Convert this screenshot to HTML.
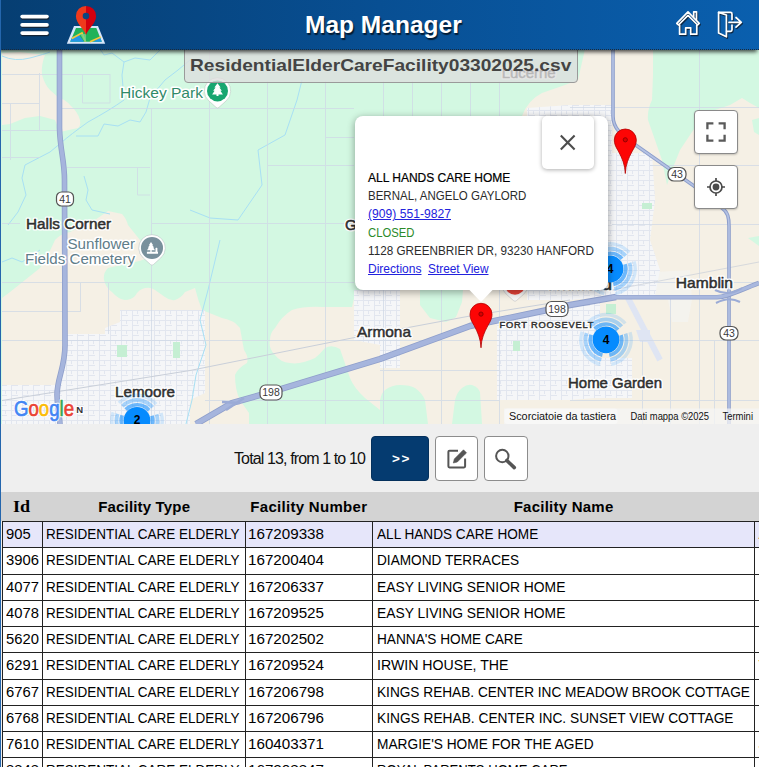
<!DOCTYPE html>
<html>
<head>
<meta charset="utf-8">
<title>Map Manager</title>
<style>
html,body{margin:0;padding:0;}
body{width:759px;height:767px;overflow:hidden;position:relative;background:#efefef;font-family:"Liberation Sans",sans-serif;color:#000;}
.abs{position:absolute;}
#lstrip{left:0;top:0;width:1.4px;height:767px;background:#2466ad;z-index:50;}
#hdr{left:0;top:0;width:759px;height:50px;background:linear-gradient(to right,#063e72 0%,#084f93 50%,#0a5fae 100%);box-shadow:-2px 2px 4px rgba(0,0,0,.7);z-index:40;border-bottom:1px dotted #1b2a3a;box-sizing:border-box;}
#title{left:305px;top:12.1px;font-weight:bold;font-size:23px;line-height:26px;color:#fff;white-space:nowrap;text-shadow:1px 2px 1px rgba(0,0,0,.65);transform:scaleX(1.066);transform-origin:0 50%;}
#map{left:0;top:49px;width:759px;height:375px;overflow:hidden;background:#d3f8e2;border-bottom:1px dotted #555;box-sizing:content-box;}
#flabel{left:184.3px;top:40px;width:391.5px;height:40.5px;background:rgba(222,222,222,.78);border:1px solid #9a9a9a;border-radius:4px;z-index:30;box-sizing:content-box;}
#flabel span{position:absolute;left:5px;top:15px;font-weight:bold;font-size:17px;line-height:20px;color:#444;white-space:nowrap;transform:scaleX(1.127);transform-origin:0 50%;}
#toolbar{left:0;top:424px;width:759px;height:68px;background:#efefef;}
#total{left:234px;top:449px;font-size:16px;line-height:20px;white-space:nowrap;color:#111;letter-spacing:-0.88px;}
.btn{box-sizing:border-box;border-radius:4px;top:436px;height:45px;}
#bnext{left:371px;width:58px;background:#053b70;border:1px solid #04305c;color:#fff;font-weight:bold;font-size:13.5px;text-align:center;line-height:43px;letter-spacing:1.6px;padding-left:3px;}
#bedit{left:435px;width:43px;background:#fff;border:1px solid #8c8c8c;}
#bfind{left:484px;width:44px;background:#fff;border:1px solid #8c8c8c;}
#thead{left:0;top:492px;width:759px;height:29px;background:#d3d3d3;}
.th{position:absolute;top:498px;font-weight:bold;font-size:15px;line-height:18px;white-space:nowrap;color:#000;}
.row{position:absolute;left:2px;width:757px;height:26.27px;background:#fff;border-top:1px solid #222;box-sizing:border-box;}
.row.sel{background:#e6e6fa;}
.c{position:absolute;top:0;height:100%;border-left:1px solid #222;box-sizing:border-box;font-size:15.5px;line-height:24px;white-space:nowrap;overflow:hidden;}
.c span{position:absolute;left:4px;top:0;}
.c1 span,.c3 span{left:2.8px;}
.c2 span{left:3.4px;}
.sx{transform-origin:0 50%;display:inline-block;}
.il{transform-origin:0 50%;height:18.15px;}
.mc{width:41.6px;height:41.4px;background:#fff;border:1px solid #8a8a8a;border-radius:4px;z-index:9;box-shadow:0 1px 2px rgba(0,0,0,.2);}
.c1{left:0;width:40px;}
.c2{left:40px;width:202.5px;}
.c3{left:242.5px;width:127.3px;}
.c4{left:369.8px;width:382.2px;}
.c5{left:752px;width:5px;}
</style>
</head>
<body>
<div id="lstrip" class="abs"></div>

<div id="hdr" class="abs">
<svg class="abs" style="left:0;top:0" width="759" height="49" viewBox="0 0 759 49">
<!--HDRICONS_S-->
<defs>
<g id="hb"><rect x="20.300" y="14.700" width="28.500" height="3.700" rx="1.800"/><rect x="20.300" y="23" width="28.500" height="3.700" rx="1.800"/><rect x="20.300" y="31.200" width="28.500" height="3.700" rx="1.800"/></g>
<g id="home" fill="none" stroke-width="1.700" stroke-linejoin="round" stroke-linecap="round">
<path d="M676.800 23.300 L688 11.800 L699.200 23.300 L697.600 25 L688 15.300 L678.400 25Z"/>
<path d="M679.600 25 V34.200 H685.700 V27.800 H690.700 V34.200 H696.800 V25"/>
<path d="M693.700 16.800 V11.800 H696.500 V19.600"/>
</g>
<g id="exit" fill="none" stroke-width="1.700" stroke-linejoin="round" stroke-linecap="round">
<path d="M718.600 12.400 L726.400 15 V36.800 L718.600 33Z"/>
<path d="M718.600 12.400 H730.500 Q732 12.400 732 14 V19.500 M732 25 V29.800 Q732 31.300 730.500 31.300 H726.600"/>
<path d="M729 22.300 H741 M736 17.500 L741.300 22.300 L736 27.100"/>
</g>
</defs>
<use href="#hb" fill="#16202c" opacity=".85" transform="translate(0.500,1.400)"/>
<use href="#hb" fill="#fff"/>
<!-- logo -->
<g>
<path d="M74 26 H98 L105.200 43.800 H66.800Z" fill="#d7e6fa"/>
<path d="M76 28 H96.300 L101.800 41.800 H70.200Z" fill="#1fb25a"/>
<path d="M70.200 41.800 L72.300 37 L78.500 34.500 L84 41.800Z" fill="#2196e8"/>
<path d="M93 41.800 L100.200 37.800 L101.800 41.800Z" fill="#2196e8"/>
<path d="M71.800 38.400 L82 33 L85.500 41.800" fill="none" stroke="#f7c83a" stroke-width="1.700"/>
<path d="M80.500 33.800 L76.500 28.500" fill="none" stroke="#f7c83a" stroke-width="1.400" opacity="0"/>
<path d="M90 41.800 L100.800 37" fill="none" stroke="#f7c83a" stroke-width="1.700"/>
<path d="M80 34 L86 34 L86 41.800 L84.500 41.800Z" fill="#6fd08d" opacity=".8"/>
<path d="M86 35 C84 29 75.900 23.500 75.900 16 A10.100 10.100 0 0 1 86 5.900Z" fill="#ef3a1c"/>
<path d="M86 35 C88 29 96.100 23.500 96.100 16 A10.100 10.100 0 0 0 86 5.900Z" fill="#d2000f"/>
<circle cx="86" cy="16.100" r="3.300" fill="#0a457f"/>
</g>
<use href="#home" stroke="#101c2c" opacity=".8" transform="translate(0.900,1.300)"/>
<use href="#home" stroke="#fff"/>
<use href="#exit" stroke="#101c2c" opacity=".8" transform="translate(0.900,1.300)"/>
<use href="#exit" stroke="#fff"/>
<!--HDRICONS_E-->
</svg>
<div id="title" class="abs">Map Manager</div>
</div>

<div id="flabel" class="abs"><span id="fl">ResidentialElderCareFacility03302025.csv</span></div>

<div id="map" class="abs">
<svg class="abs" style="left:0;top:0" width="759" height="375" viewBox="0 49 759 375" font-family="Liberation Sans, sans-serif">
<!--MAPBASE_S-->
<defs>
<pattern id="streets" width="11" height="10" patternUnits="userSpaceOnUse">
<path d="M0 .5H11M.5 0V10M5.5 0V4M0 5.5H7" stroke="#e2e6ef" stroke-width="1" fill="none"/>
</pattern>
<filter id="blur1"><feGaussianBlur stdDeviation="1.2"/></filter>
</defs>
<rect x="0" y="49" width="759" height="375" fill="#d3f8e2"/>
<g fill="#f5f0e5">
<!-- B1 top-left beige -->
<path d="M2 53 L20 52 L45 55 Q41 65 42 75 Q45 85 50 90 L58 97 Q66 100 70 105 Q78 112 80 120 Q81 126 78 128 L60 132 L55 120 L40 116 L25 118 L10 124 L2 125Z"/>
<!-- B2 Lemoore beige -->
<path d="M108 211 L122 214 Q126 218 128 225 L140 240 L150 255 Q146 260 135 262 L108 268 Q103 273 104 280 Q106 288 112 292 Q118 299 125 300 Q131 300 135 296 Q139 289 145 288 Q151 287 155 290 L165 297 Q170 301 175 300 Q181 298 185 292 L195 288 Q198 300 202 310 L222 318 Q234 320 240 328 L244 350 Q249 357 247 363 Q238 368 235 375 Q235 390 240 400 L249 413 L249 424 L2 424 L2 298 L10 292 L25 280 L40 268 L48 255 L55 240 Q60 234 70 232 L95 220Z"/>
<!-- big right beige -->
<path d="M585 49 L653 49 L653 75 L652 100 Q647 110 648 120 L655 140 L662 160 L667 185 L672 170 L680 150 L690 135 L700 120 Q706 113 715 110 L730 105 L742 98 L750 103 L759 108 L759 424 L380 424 L380 410 L365 398 Q354 388 350 378 L340 349 Q332 344 325 348 Q320 354 315 358 Q300 365 290 363 Q280 362 275 355 Q268 348 270 340 Q270 333 275 328 Q282 316 292 310 Q305 306 322 307 L352 307 L356 290 L520 290 L522 116 Q528 100 542 93 L565 85 L578 80Z"/>
</g>
<!-- green patches on beige -->
<g fill="#d3f8e2">
<path d="M420 290 L463 290 L462 302 L456 317 L446 322 L430 318 L420 305Z"/>
<path d="M380 424 L380 400 Q382 392 385 390 Q392 385 400 385 Q410 385 415 388 Q422 393 425 400 L428 424Z"/>
<path d="M452 424 L455 400 Q457 392 462 388 Q467 384 472 385 Q478 387 480 392 L482 424Z"/>
<path d="M752 120 L759 118 L759 135 L754 132Z"/>
<path d="M748 238 L759 236 L759 246Z"/>
<path d="M606 304 L616 304 L616 314 L606 314Z" fill="#c5efd3"/>
</g>
<!-- urban areas -->
<g fill="#f5f6f8">
<path d="M120 310 L205 310 L205 393 L190 400 L190 424 L2 424 L2 385 L60 385 L67 334 L105 334 L105 328 L120 322Z"/>
<path d="M527 108 L570 105 L612 105 L612 153 L652 153 L655 200 L650 240 L660 270 L655 296 L615 296 L570 300 L527 300Z"/>
<path d="M497 322 L570 306 L600 300 L600 358 L632 358 L632 398 L595 398 L570 400 L497 400Z"/>
<path d="M354 290 L400 290 L400 368 L380 368 L380 345 L354 340Z"/>
<path d="M655 272 L690 270 L692 300 L688 322 L672 322 L668 300 L655 296Z" opacity=".45"/>
</g>
<g fill="url(#streets)">
<path d="M120 310 L205 310 L205 393 L190 400 L190 424 L2 424 L2 385 L60 385 L67 334 L105 334 L105 328 L120 322Z"/>
<path d="M527 108 L570 105 L612 105 L612 153 L652 153 L655 200 L650 240 L660 270 L655 296 L615 296 L570 300 L527 300Z"/>
<path d="M497 322 L570 306 L600 300 L600 358 L632 358 L632 398 L595 398 L570 400 L497 400Z"/>
<path d="M354 290 L400 290 L400 368 L380 368 L380 345 L354 340Z"/>
</g>
<!-- small parks in urban -->
<g fill="#c5efd3">
<rect x="117" y="345" width="10" height="12"/><rect x="173" y="342" width="7" height="16"/>
<rect x="513" y="341" width="7" height="10"/><rect x="642" y="203" width="10" height="6"/>
</g>
<!-- airport runway -->
<path d="M628 298 L660 360" stroke="#dfe5f3" stroke-width="6" fill="none"/>
<path d="M636 330 L650 330 L650 342 L640 342Z" fill="#dfe5f3"/>
<!--MAPBASE_E-->
<!--MAPROADS_S-->
<!-- streams -->
<g fill="none" stroke="#a8e0f4" stroke-width="1">
<path d="M2 56 Q15 62 30 58 T50 52"/>
<path d="M100 49 L104 55 L112 53 L124 62 L122 75 L124 100 Q110 110 88 122 Q70 135 62 142 L50 152 L25 165 L22 178 L26 195 L18 212 L8 225"/>
<path d="M124 62 L135 58 L150 60 L160 50"/>
<path d="M76 136 L98 136 L104 124 L118 126 L130 120 L140 122 L146 112 L150 98 L165 80 L178 70 L190 60"/>
<path d="M84 176 L88 190 L86 200 L92 210 L110 214"/>
<path d="M190 210 L210 218 L238 220 L262 185 L258 150 L285 135 L297 100 L302 80"/>
<path d="M220 240 L208 290 L200 320 L206 345 L196 375 L192 400 L186 424"/>
<path d="M2 262 L12 258 L22 262 L40 250"/>
</g>
<!-- minor roads -->
<g fill="none" stroke="#cfd8e6" stroke-width="1" opacity=".75">
<path d="M2 74.5H110M2 103.5H40M2 130.500H58M2 157.500H40M67 167.500H150M2 223.500H20"/>
<path d="M39.500 73V130M10.500 103V160M82.500 74V103H110V74M137.500 167V195H150"/>
<path d="M151.500 108V424"/>
<path d="M209.500 49V424M267.500 81V424M325.500 81V424"/>
<path d="M60 108.500H354M267 165.500H354M325 137.500H354M152 223.500H354"/>
<path d="M2 282.500H354M2 311.500H80M2 340.500H354M205 400.500H380"/>
<path d="M108.500 282V334M80.500 282V312"/>
<path d="M383.500 81V116M441.500 81V116M470.500 81V116M499.500 81V116M412.500 81V116"/>
<path d="M699.500 49V424M759 107.500H570M650 165.500H759M612 224.500H759M612 282.500H759"/>
<path d="M612 340.500H759M570 400.500H759M670.500 297V424M714.500 340V424M642.500 340V424"/>
<path d="M383.500 290V424M441.500 290V424M499.500 290V424M354 340.500H500M380 400.500H500M380 370.500H500"/>
</g>
<!-- rail -->
<g fill="none" stroke="#c9cfd9" stroke-width="1">
<path d="M2 400.500L190 370.500L352 338L470 316L570 300"/>
<path d="M612 290L759 262" opacity=".7"/>
</g>
<!-- highways -->
<g fill="none" stroke-linecap="butt" stroke-linejoin="round">
<path id="h41" d="M59.500 49 L59.500 128 C60 150 64.500 160 64.500 180 L65 345 C65 368 57 378 57 395 C57 410 60 416 60 424" stroke="#8f9fcb" stroke-width="5.600"/>
<path d="M59.500 49 L59.500 128 C60 150 64.500 160 64.500 180 L65 345 C65 368 57 378 57 395 C57 410 60 416 60 424" stroke="#a6b5dd" stroke-width="4"/>
<path d="M613 49 L613 116 C613 128 620 134 637 146 L694 186 L722 208 C728 212 729 218 729 226 L729 424" stroke="#8d9ecb" stroke-width="3.600"/>
<path d="M613 49 L613 116 C613 128 620 134 637 146 L694 186 L722 208 C728 212 729 218 729 226 L729 424" stroke="#b4c2e4" stroke-width="1.600"/>
<path d="M196 424 L232 403 L271 392 L380 359 L470 326 L545 310.500 L570 305 L616 297" stroke="#8f9fcb" stroke-width="6.400"/><path d="M612 297.200 L717 297.200 C727 297.200 738 291 759 283" stroke="#8f9fcb" stroke-width="4.600"/>
<path d="M196 424 L232 403 L271 392 L380 359 L470 326 L545 310.500 L570 305 L616 297" stroke="#a6b5dd" stroke-width="4.800"/><path d="M612 297.200 L717 297.200 C727 297.200 738 291 759 283" stroke="#a9b8de" stroke-width="3.200"/>
<!-- interchanges -->
<path d="M222 402 L240 403 M226 410 L244 398" stroke="#9babd6" stroke-width="2.500"/>
<path d="M715 290 Q729 297 742 288 M716 303 Q729 296 740 302" stroke="#9babd6" stroke-width="2"/>
</g>
<!-- shields -->
<g font-size="10.500" fill="#3a3a3a" text-anchor="middle" font-family="Liberation Sans, sans-serif">
<rect x="56.500" y="192" width="17" height="14" rx="5" fill="#fff" stroke="#555" stroke-width="1.200"/><text x="65" y="202.700">41</text>
<rect x="668" y="167.500" width="18" height="13.500" rx="6" fill="#fff" stroke="#555" stroke-width="1.200"/><text x="677" y="178">43</text>
<rect x="720" y="326.500" width="18" height="13.500" rx="6" fill="#fff" stroke="#555" stroke-width="1.200"/><text x="729" y="337">43</text>
<rect x="260" y="385" width="22" height="15" rx="5.500" fill="#fff" stroke="#555" stroke-width="1.200"/><text x="271" y="396.200">198</text>
<rect x="546" y="301.500" width="22" height="15" rx="5.500" fill="#fff" stroke="#555" stroke-width="1.200"/><text x="557" y="312.700">198</text>
</g>
<!--MAPROADS_E-->
<!--MAPLABELS_S-->
<g font-family="Liberation Sans, sans-serif" stroke-linejoin="round">
<text x="120" y="98" font-size="15" fill="#fff" stroke="#fff" stroke-width="3.2" textLength="83" lengthAdjust="spacingAndGlyphs">Hickey Park</text>
<text x="120" y="98" font-size="15" fill="#2f8a68" textLength="83" lengthAdjust="spacingAndGlyphs">Hickey Park</text>
<text x="26" y="228.5" font-size="15" fill="#fff" stroke="#fff" stroke-width="3.2" textLength="85" lengthAdjust="spacingAndGlyphs">Halls Corner</text>
<text x="26" y="228.5" font-size="15" fill="#2f2f2f" stroke="#2f2f2f" stroke-width="0.5" textLength="85" lengthAdjust="spacingAndGlyphs">Halls Corner</text>
<text x="67.5" y="248.5" font-size="15" fill="#fff" stroke="#fff" stroke-width="3.2" textLength="67.5" lengthAdjust="spacingAndGlyphs">Sunflower</text>
<text x="67.5" y="248.5" font-size="15" fill="#5f7d8a" textLength="67.5" lengthAdjust="spacingAndGlyphs">Sunflower</text>
<text x="25" y="264" font-size="15" fill="#fff" stroke="#fff" stroke-width="3.2" textLength="110" lengthAdjust="spacingAndGlyphs">Fields Cemetery</text>
<text x="25" y="264" font-size="15" fill="#5f7d8a" textLength="110" lengthAdjust="spacingAndGlyphs">Fields Cemetery</text>
<text x="115" y="397" font-size="15" fill="#fff" stroke="#fff" stroke-width="3.2" textLength="60" lengthAdjust="spacingAndGlyphs">Lemoore</text>
<text x="115" y="397" font-size="15" fill="#2f2f2f" stroke="#2f2f2f" stroke-width="0.5" textLength="60" lengthAdjust="spacingAndGlyphs">Lemoore</text>
<text x="357" y="337" font-size="15" fill="#fff" stroke="#fff" stroke-width="3.2" textLength="54" lengthAdjust="spacingAndGlyphs">Armona</text>
<text x="357" y="337" font-size="15" fill="#2f2f2f" stroke="#2f2f2f" stroke-width="0.5" textLength="54" lengthAdjust="spacingAndGlyphs">Armona</text>
<text x="345" y="229.5" font-size="15" fill="#fff" stroke="#fff" stroke-width="3.2">Grangeville</text>
<text x="345" y="229.5" font-size="15" fill="#2f2f2f" stroke="#2f2f2f" stroke-width="0.5">Grangeville</text>
<text x="501.7" y="78" font-size="15" fill="#fff" stroke="#fff" stroke-width="3.2" textLength="54" lengthAdjust="spacingAndGlyphs">Lucerne</text>
<text x="501.7" y="78" font-size="15" fill="#2f2f2f" stroke="#2f2f2f" stroke-width="0.5" textLength="54" lengthAdjust="spacingAndGlyphs">Lucerne</text>
<text x="675.8" y="288.2" font-size="15" fill="#fff" stroke="#fff" stroke-width="3.2" textLength="57.2" lengthAdjust="spacingAndGlyphs">Hamblin</text>
<text x="675.8" y="288.2" font-size="15" fill="#2f2f2f" stroke="#2f2f2f" stroke-width="0.5" textLength="57.2" lengthAdjust="spacingAndGlyphs">Hamblin</text>
<text x="568" y="387.5" font-size="15" fill="#fff" stroke="#fff" stroke-width="3.2" textLength="94" lengthAdjust="spacingAndGlyphs">Home Garden</text>
<text x="568" y="387.5" font-size="15" fill="#2f2f2f" stroke="#2f2f2f" stroke-width="0.5" textLength="94" lengthAdjust="spacingAndGlyphs">Home Garden</text>
<text x="548" y="290.3" font-size="17.5" fill="#fff" stroke="#fff" stroke-width="3.2" textLength="64" lengthAdjust="spacingAndGlyphs">Hanford</text>
<text x="548" y="290.3" font-size="17.5" fill="#2f2f2f" stroke="#2f2f2f" stroke-width="0.55" textLength="64" lengthAdjust="spacingAndGlyphs">Hanford</text>
<text x="499.5" y="328.2" font-size="9.3" fill="#fff" stroke="#fff" stroke-width="2.6" textLength="94" lengthAdjust="spacing">FORT ROOSEVELT</text>
<text x="499.5" y="328.2" font-size="9.3" fill="#333" stroke="#333" stroke-width="0.5" textLength="94" lengthAdjust="spacing">FORT ROOSEVELT</text>
</g>
<!-- POI pins -->
<g>
<path d="M208.840 100.850 A13.200 13.200 0 1 1 226.160 100.850 L219 107.300 Q217.500 108.700 216 107.300Z" fill="#fff" stroke="#b9c9c0" stroke-width=".6"/>
<circle cx="217.500" cy="90.900" r="10.500" fill="#18a670"/>
<path d="M217.500 83.200 L220.600 87.400 H219.400 L221.800 90.800 H220.400 L222.900 94.400 H218.500 V96 H216.500 V94.400 H212.100 L214.600 90.800 H213.200 L215.600 87.400 H214.400Z" fill="#fff"/>
<path d="M143.300 258 A13.300 13.300 0 1 1 160.700 258 L153.500 264.500 Q152 265.900 150.500 264.500Z" fill="#fff" stroke="#b9c4c4" stroke-width=".6"/>
<circle cx="152" cy="247.900" r="11" fill="#78909c"/>
<path d="M151 242 L153 245 H152.300 L154 247.500 H153.200 L155 250.200 H151.700 V251.700 H155.500 V248.300 Q155.500 247.700 156.200 247.700 H156.800 Q157.400 247.700 157.400 248.300 V251.700 H158 V253.800 H146.900 V251.700 H150.300 V250.200 H147 L148.800 247.500 H148 L149.700 245 H149Z" fill="#fff"/>
<path d="M506.300 294.200 A13.200 13.200 0 1 1 523.700 294.200 L516.500 300.600 Q515 302 513.500 300.600Z" fill="#f6f6f6" stroke="#bdbdbd" stroke-width=".6"/>
<circle cx="515" cy="284.200" r="10.500" fill="#e8433a"/>
</g>
<!--MAPLABELS_E-->
<!--MAPMARKERS_S-->
<defs>
<g id="cl">
<g transform="rotate(-17.5)">
<circle r="25.2" fill="none" stroke="#0a8cff" stroke-opacity="0.15" stroke-width="3.4" stroke-dasharray="41.783 10.996"/>
<circle r="20.5" fill="none" stroke="#0a8cff" stroke-opacity="0.33" stroke-width="3.8" stroke-dasharray="33.990 8.945"/>
<circle r="15.7" fill="none" stroke="#0a8cff" stroke-opacity="0.58" stroke-width="3.8" stroke-dasharray="26.032 6.850"/>
</g>
<circle r="13.400" fill="#068bfe"/>
</g>
<g id="pin">
<path d="M0 0 C-.4 -9 -3 -15 -7 -22.500 C-9.800 -27 -11 -30 -11 -33.500 A11 11 0 1 1 11 -33.500 C11 -30 9.800 -27 7 -22.500 C3 -15 .4 -9 0 0Z" fill="#fd0505" stroke="#b30000" stroke-width=".8"/>
<circle cx="0" cy="-33.700" r="2.100" fill="#d90000" stroke="#8a0000" stroke-width=".9"/>
</g>
</defs>
<g font-family="Liberation Sans, sans-serif" font-weight="bold" font-size="12" text-anchor="middle" fill="#000">
<use href="#cl" x="610" y="269"/><text x="610" y="273.300">4</text>
<use href="#cl" x="606" y="339.800"/><text x="606" y="344.100">4</text>
<use href="#cl" x="137" y="420.500"/><text x="137" y="424.300">2</text>
</g>
<use href="#pin" x="481" y="347.800"/>
<use href="#pin" x="625.300" y="173.500"/>
<!-- google logo -->
<g font-family="Liberation Sans, sans-serif" font-size="22.500" stroke-linejoin="round">
<text x="14" y="415.500" textLength="60" lengthAdjust="spacingAndGlyphs" fill="#fff" stroke="#fff" stroke-width="2.600">Google</text>
<text x="14" y="415.500" textLength="60" lengthAdjust="spacingAndGlyphs" stroke-width=".7"><tspan fill="#4285f4" stroke="#4285f4">G</tspan><tspan fill="#ea4335" stroke="#ea4335">o</tspan><tspan fill="#fbbc05" stroke="#fbbc05">o</tspan><tspan fill="#4285f4" stroke="#4285f4">g</tspan><tspan fill="#34a853" stroke="#34a853">l</tspan><tspan fill="#ea4335" stroke="#ea4335">e</tspan></text>
</g>
<text x="76.200" y="412.800" font-family="Liberation Sans, sans-serif" font-size="9.500" font-weight="bold" fill="#333" stroke="#fff" stroke-width="2" paint-order="stroke">N</text>
<!-- attribution -->
<rect x="504" y="408.500" width="255" height="15.500" fill="#f5f5f5" fill-opacity=".72"/>
<rect x="504.500" y="408.500" width="113" height="15.500" rx="3" fill="#f8f8f8" fill-opacity=".85"/>
<g font-family="Liberation Sans, sans-serif" font-size="10.500" fill="#111">
<text x="509" y="419.500" textLength="107" lengthAdjust="spacingAndGlyphs">Scorciatoie da tastiera</text>
<text x="630.500" y="419.500" textLength="78.500" lengthAdjust="spacingAndGlyphs">Dati mappa ©2025</text>
<text x="722.400" y="419.500" textLength="30.600" lengthAdjust="spacingAndGlyphs">Termini</text>
</g>
<!--MAPMARKERS_E-->
</svg>
<!--INFOWIN_S-->
<div class="abs" id="iw" style="left:354.6px;top:66.8px;width:253.6px;height:174.1px;background:#fff;border-radius:8px;box-shadow:0 2px 7px 1px rgba(0,0,0,.3);z-index:5;"></div>
<svg class="abs" style="left:464px;top:240.200px;z-index:6" width="34" height="16" viewBox="464 288.500 34 16"><path d="M468.500 288.500 L493.500 288.500 L481 301.500Z" fill="#fff"/></svg>
<div class="abs" id="iwx" style="left:542.4px;top:67.4px;width:52px;height:53px;background:#fff;border-radius:5px;box-shadow:0 1px 4px rgba(0,0,0,.32);z-index:7;">
<svg class="abs" style="left:0;top:0" width="52" height="52" viewBox="0 0 52 52"><path d="M18.800 19.600 L32.600 33.400 M32.600 19.600 L18.800 33.400" stroke="#4d4d4d" stroke-width="2.100" fill="none"/></svg>
</div>
<div class="abs" id="iwt" style="left:368px;top:120.200px;z-index:8;font-size:13px;line-height:18.15px;color:#2b2b2b;white-space:nowrap;">
<div class="il" style="transform:scaleX(.9234);color:#000;-webkit-text-stroke:.22px #000;">ALL HANDS CARE HOME</div>
<div class="il" style="transform:scaleX(.8852);">BERNAL, ANGELO GAYLORD</div>
<div class="il" style="transform:scaleX(.9336);color:#2222dd;text-decoration:underline;">(909) 551-9827</div>
<div class="il" style="transform:scaleX(.8678);color:#2a8a2a;">CLOSED</div>
<div class="il" style="transform:scaleX(.8997);">1128 GREENBRIER DR, 93230 HANFORD</div>
<div class="il" style="position:relative;height:18px;"><span class="abs" style="left:0;top:0;transform:scaleX(.9257);transform-origin:0 50%;color:#2222dd;text-decoration:underline;">Directions</span><span class="abs" style="left:59.500px;top:0;transform:scaleX(.9132);transform-origin:0 50%;color:#2222dd;text-decoration:underline;">Street View</span></div>
</div>
<!--INFOWIN_E-->
<!--MAPCTRL_S-->
<div class="abs mc" style="left:694.2px;top:61.200px;"><svg width="42" height="42" viewBox="0 0 42 42" class="abs" style="left:0;top:0"><path d="M12.400 18.200 V12.400 H18.400 M23.600 12.400 H29.600 V18.200 M29.600 23.800 V29.600 H23.600 M18.400 29.600 H12.400 V23.800" stroke="#5a5a5a" stroke-width="2.300" fill="none"/></svg></div>
<div class="abs mc" style="left:694.2px;top:116.300px;"><svg width="42" height="42" viewBox="0 0 42 42" class="abs" style="left:0;top:0"><circle cx="21" cy="21" r="6" fill="none" stroke="#4a4a4a" stroke-width="1.700"/><circle cx="21" cy="21" r="3.400" fill="#4a4a4a"/><path d="M21 12 V15 M21 27 V30 M12 21 H15 M27 21 H30" stroke="#4a4a4a" stroke-width="1.700"/></svg></div>
<!--MAPCTRL_E-->
</div>

<div id="toolbar" class="abs"></div>
<div id="total" class="abs">Total 13, from 1 to 10</div>
<div id="bnext" class="abs btn">&gt;&gt;</div>
<div id="bedit" class="abs btn"><svg class="abs" style="left:-1px;top:-1px" width="43" height="45" viewBox="435 436 43 45"><path d="M458 450.700 H449.500 Q448.400 450.700 448.400 451.800 V466.300 Q448.400 467.400 449.500 467.400 H464 Q465.100 467.400 465.100 466.300 V458.500" fill="none" stroke="#555" stroke-width="2"/><path d="M453.300 463 L454.300 459 L463.500 449.800 L466.500 452.800 L457.300 462Z M462 451.300 L465 454.300" fill="#555" stroke="#555" stroke-width=".6"/></svg></div>
<div id="bfind" class="abs btn"><svg class="abs" style="left:-1px;top:-1px" width="44" height="45" viewBox="484 436 44 45"><circle cx="502.300" cy="456" r="6.200" fill="none" stroke="#555" stroke-width="2"/><path d="M506.800 460.500 L514.300 467.600" stroke="#555" stroke-width="3.600" stroke-linecap="round"/></svg></div>

<div id="thead" class="abs"></div>
<!--TABLE_START-->
<div class="th" id="th1" style="left:13px;font-size:16.5px;font-family:'Liberation Serif',serif;transform:scaleX(1.1);transform-origin:0 50%;">Id</div>
<div class="th" id="th2" style="left:98.3px;letter-spacing:0.16px;">Facility Type</div>
<div class="th" id="th3" style="left:250.3px;letter-spacing:0.3px;">Facility Number</div>
<div class="th" id="th4" style="left:513.7px;letter-spacing:0.24px;">Facility Name</div>
<div class="row sel" style="top:521.00px"><div class="c c1"><span class="sx" style="transform:scaleX(0.9541)">905</span></div><div class="c c2"><span class="sx" style="transform:scaleX(0.8712)">RESIDENTIAL CARE ELDERLY</span></div><div class="c c3"><span class="sx" style="transform:scaleX(0.9795)">167209338</span></div><div class="c c4"><span class="sx" style="transform:scaleX(0.8773)">ALL HANDS CARE HOME</span></div><div class="c c5"><span style="left:3.5px;color:#8a4a10">A</span></div></div>
<div class="row" style="top:547.27px"><div class="c c1"><span class="sx" style="transform:scaleX(0.9541)">3906</span></div><div class="c c2"><span class="sx" style="transform:scaleX(0.8712)">RESIDENTIAL CARE ELDERLY</span></div><div class="c c3"><span class="sx" style="transform:scaleX(0.9795)">167200404</span></div><div class="c c4"><span class="sx" style="transform:scaleX(0.8798)">DIAMOND TERRACES</span></div><div class="c c5"><span style="left:3.5px;color:#ecd9a0">E</span></div></div>
<div class="row" style="top:573.54px"><div class="c c1"><span class="sx" style="transform:scaleX(0.9541)">4077</span></div><div class="c c2"><span class="sx" style="transform:scaleX(0.8712)">RESIDENTIAL CARE ELDERLY</span></div><div class="c c3"><span class="sx" style="transform:scaleX(0.9795)">167206337</span></div><div class="c c4"><span class="sx" style="transform:scaleX(0.8940)">EASY LIVING SENIOR HOME</span></div><div class="c c5"><span style="left:3.5px;color:#ecd9a0">E</span></div></div>
<div class="row" style="top:599.81px"><div class="c c1"><span class="sx" style="transform:scaleX(0.9541)">4078</span></div><div class="c c2"><span class="sx" style="transform:scaleX(0.8712)">RESIDENTIAL CARE ELDERLY</span></div><div class="c c3"><span class="sx" style="transform:scaleX(0.9795)">167209525</span></div><div class="c c4"><span class="sx" style="transform:scaleX(0.8940)">EASY LIVING SENIOR HOME</span></div><div class="c c5"><span style="left:3.5px;color:#ecd9a0">E</span></div></div>
<div class="row" style="top:626.08px"><div class="c c1"><span class="sx" style="transform:scaleX(0.9541)">5620</span></div><div class="c c2"><span class="sx" style="transform:scaleX(0.8712)">RESIDENTIAL CARE ELDERLY</span></div><div class="c c3"><span class="sx" style="transform:scaleX(0.9795)">167202502</span></div><div class="c c4"><span class="sx" style="transform:scaleX(0.8797)">HANNA'S HOME CARE</span></div><div class="c c5"><span style="left:3.5px;color:#ecd9a0">E</span></div></div>
<div class="row" style="top:652.35px"><div class="c c1"><span class="sx" style="transform:scaleX(0.9541)">6291</span></div><div class="c c2"><span class="sx" style="transform:scaleX(0.8712)">RESIDENTIAL CARE ELDERLY</span></div><div class="c c3"><span class="sx" style="transform:scaleX(0.9795)">167209524</span></div><div class="c c4"><span class="sx" style="transform:scaleX(0.9125)">IRWIN HOUSE, THE</span></div><div class="c c5"><span style="left:3.5px;color:#b06a20">V</span></div></div>
<div class="row" style="top:678.62px"><div class="c c1"><span class="sx" style="transform:scaleX(0.9541)">6767</span></div><div class="c c2"><span class="sx" style="transform:scaleX(0.8712)">RESIDENTIAL CARE ELDERLY</span></div><div class="c c3"><span class="sx" style="transform:scaleX(0.9795)">167206798</span></div><div class="c c4"><span class="sx" style="transform:scaleX(0.8807)">KINGS REHAB. CENTER INC MEADOW BROOK COTTAGE</span></div><div class="c c5"><span style="left:3.5px;color:#ecd9a0">E</span></div></div>
<div class="row" style="top:704.89px"><div class="c c1"><span class="sx" style="transform:scaleX(0.9541)">6768</span></div><div class="c c2"><span class="sx" style="transform:scaleX(0.8712)">RESIDENTIAL CARE ELDERLY</span></div><div class="c c3"><span class="sx" style="transform:scaleX(0.9795)">167206796</span></div><div class="c c4"><span class="sx" style="transform:scaleX(0.8857)">KINGS REHAB. CENTER INC. SUNSET VIEW COTTAGE</span></div><div class="c c5"><span style="left:3.5px;color:#ecd9a0">E</span></div></div>
<div class="row" style="top:731.16px"><div class="c c1"><span class="sx" style="transform:scaleX(0.9541)">7610</span></div><div class="c c2"><span class="sx" style="transform:scaleX(0.8712)">RESIDENTIAL CARE ELDERLY</span></div><div class="c c3"><span class="sx" style="transform:scaleX(0.9795)">160403371</span></div><div class="c c4"><span class="sx" style="transform:scaleX(0.8852)">MARGIE'S HOME FOR THE AGED</span></div><div class="c c5"><span style="left:3.5px;color:#555">J</span></div></div>
<div class="row" style="top:757.43px"><div class="c c1"><span class="sx" style="transform:scaleX(0.9541)">8848</span></div><div class="c c2"><span class="sx" style="transform:scaleX(0.8712)">RESIDENTIAL CARE ELDERLY</span></div><div class="c c3"><span class="sx" style="transform:scaleX(0.9795)">167208847</span></div><div class="c c4"><span class="sx" style="transform:scaleX(0.8457)">ROYAL PARENTS HOME CARE</span></div><div class="c c5"><span style="left:3.5px;color:#ecd9a0">E</span></div></div>
<!--TABLE_END-->
</body>
</html>
